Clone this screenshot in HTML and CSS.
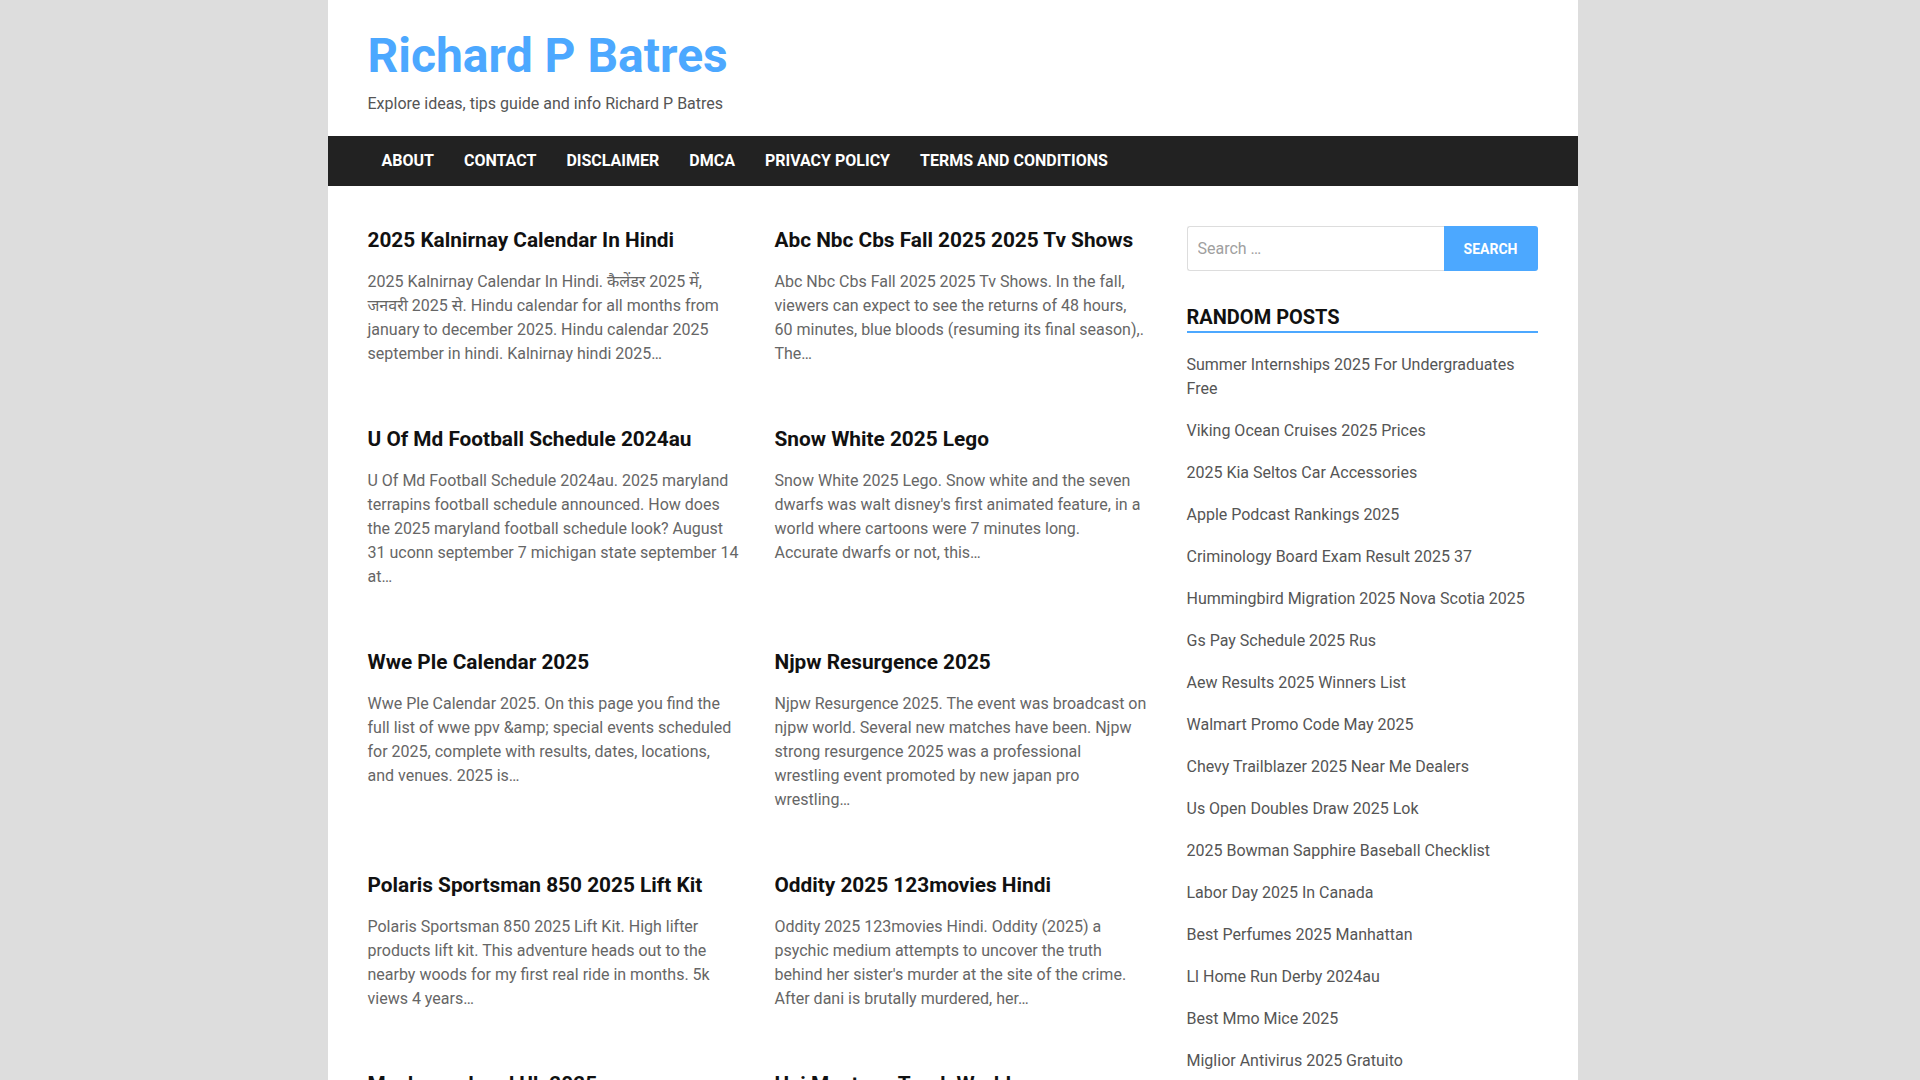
FILE: index.html
```html
<!DOCTYPE html>
<html lang="en">
<head>
<meta charset="utf-8">
<title>Richard P Batres</title>
<link rel="stylesheet" href="styles.css">
</head>
<body>
<div class="site">
  <header class="site-header">
    <h1 class="site-title">Richard P Batres</h1>
    <p class="site-desc">Explore ideas, tips guide and info Richard P Batres</p>
  </header>
  <nav class="main-nav">
    <a href="#">About</a>
    <a href="#">Contact</a>
    <a href="#">Disclaimer</a>
    <a href="#">DMCA</a>
    <a href="#">Privacy Policy</a>
    <a href="#">Terms and Conditions</a>
  </nav>
  <div class="content">
    <main class="posts">
      <article class="post">
        <h2 class="post-title">2025 Kalnirnay Calendar In Hindi</h2>
        <p class="post-excerpt">2025 Kalnirnay Calendar In Hindi. कैलेंडर 2025 में, जनवरी 2025 से. Hindu calendar for all months from january to december 2025. Hindu calendar 2025 september in hindi. Kalnirnay hindi 2025…</p>
      </article>
      <article class="post">
        <h2 class="post-title">Abc Nbc Cbs Fall 2025 2025 Tv Shows</h2>
        <p class="post-excerpt">Abc Nbc Cbs Fall 2025 2025 Tv Shows. In the fall, viewers can expect to see the returns of 48 hours, 60 minutes, blue bloods (resuming its final season),. The…</p>
      </article>
      <article class="post">
        <h2 class="post-title">U Of Md Football Schedule 2024au</h2>
        <p class="post-excerpt">U Of Md Football Schedule 2024au. 2025 maryland terrapins football schedule announced. How does the 2025 maryland football schedule look? August 31 uconn september 7 michigan state september 14 at…</p>
      </article>
      <article class="post">
        <h2 class="post-title">Snow White 2025 Lego</h2>
        <p class="post-excerpt">Snow White 2025 Lego. Snow white and the seven dwarfs was walt disney's first animated feature, in a world where cartoons were 7 minutes long. Accurate dwarfs or not, this…</p>
      </article>
      <article class="post">
        <h2 class="post-title">Wwe Ple Calendar 2025</h2>
        <p class="post-excerpt">Wwe Ple Calendar 2025. On this page you find the full list of wwe ppv &amp;amp; special events scheduled for 2025, complete with results, dates, locations, and venues. 2025 is…</p>
      </article>
      <article class="post">
        <h2 class="post-title">Njpw Resurgence 2025</h2>
        <p class="post-excerpt">Njpw Resurgence 2025. The event was broadcast on njpw world. Several new matches have been. Njpw strong resurgence 2025 was a professional wrestling event promoted by new japan pro wrestling…</p>
      </article>
      <article class="post">
        <h2 class="post-title">Polaris Sportsman 850 2025 Lift Kit</h2>
        <p class="post-excerpt">Polaris Sportsman 850 2025 Lift Kit. High lifter products lift kit. This adventure heads out to the nearby woods for my first real ride in months. 5k views 4 years…</p>
      </article>
      <article class="post">
        <h2 class="post-title">Oddity 2025 123movies Hindi</h2>
        <p class="post-excerpt">Oddity 2025 123movies Hindi. Oddity (2025) a psychic medium attempts to uncover the truth behind her sister's murder at the site of the crime. After dani is brutally murdered, her…</p>
      </article>
      <article class="post">
        <h2 class="post-title">Mushroomhead Uk 2025</h2>
        <p class="post-excerpt">Mushroomhead Uk 2025. The band returns to the united kingdom for a run of headline shows across the country…</p>
      </article>
      <article class="post">
        <h2 class="post-title">Hai Mustang Truck World</h2>
        <p class="post-excerpt">Hai Mustang Truck World. Explore the latest lineup of trucks and accessories available this season…</p>
      </article>
    </main>
    <aside class="sidebar">
      <form class="search-form">
        <input class="search-field" type="search" placeholder="Search …">
        <button class="search-submit" type="button">Search</button>
      </form>
      <section class="widget">
        <h3 class="widget-title">Random Posts</h3>
        <ul class="widget-list">
          <li><a href="#">Summer Internships 2025 For Undergraduates Free</a></li>
          <li><a href="#">Viking Ocean Cruises 2025 Prices</a></li>
          <li><a href="#">2025 Kia Seltos Car Accessories</a></li>
          <li><a href="#">Apple Podcast Rankings 2025</a></li>
          <li><a href="#">Criminology Board Exam Result 2025 37</a></li>
          <li><a href="#">Hummingbird Migration 2025 Nova Scotia 2025</a></li>
          <li><a href="#">Gs Pay Schedule 2025 Rus</a></li>
          <li><a href="#">Aew Results 2025 Winners List</a></li>
          <li><a href="#">Walmart Promo Code May 2025</a></li>
          <li><a href="#">Chevy Trailblazer 2025 Near Me Dealers</a></li>
          <li><a href="#">Us Open Doubles Draw 2025 Lok</a></li>
          <li><a href="#">2025 Bowman Sapphire Baseball Checklist</a></li>
          <li><a href="#">Labor Day 2025 In Canada</a></li>
          <li><a href="#">Best Perfumes 2025 Manhattan</a></li>
          <li><a href="#">Ll Home Run Derby 2024au</a></li>
          <li><a href="#">Best Mmo Mice 2025</a></li>
          <li><a href="#">Miglior Antivirus 2025 Gratuito</a></li>
          <li><a href="#">Spring Break 2025 Dates Texas</a></li>
          <li><a href="#">Nfl Draft 2025 Order Of Picks</a></li>
        </ul>
      </section>
    </aside>
  </div>
</div>
</body>
</html>
```
FILE: styles.css
```css
* { box-sizing: border-box; }

html, body {
  margin: 0;
  padding: 0;
}

body {
  background: #dddddd;
  padding-right: 15px;
  font-family: Roboto, "Noto Sans", "Noto Sans Devanagari", sans-serif;
  font-size: 16px;
  line-height: 1.5;
  color: #555555;
}

a { text-decoration: none; color: inherit; }

.site {
  width: 1250px;
  margin: 0 auto;
  background: #ffffff;
  min-height: 1600px;
}

.site-header {
  padding: 26px 40px 20px;
}

.site-title {
  margin: 0;
  font-size: 48px;
  line-height: 60px;
  font-weight: 700;
  color: #4ca8ff;
}

.site-desc {
  margin: 6px 0 0;
  font-size: 16px;
  line-height: 24px;
  color: #555555;
}

.main-nav {
  display: flex;
  height: 50px;
  align-items: center;
  padding: 0 39px;
  background: #222222;
}

.main-nav a {
  padding: 0 15px;
  font-size: 16px;
  font-weight: 700;
  line-height: 50px;
  text-transform: uppercase;
  color: #ffffff;
}

.content {
  display: flex;
  gap: 39px;
  padding: 41px 40px 0;
}

.posts {
  flex: 0 0 780px;
  display: grid;
  grid-template-columns: 372px 373px;
  column-gap: 35px;
  row-gap: 60px;
  align-content: start;
}

.post-title {
  margin: 0 0 16px;
  font-size: 20.8px;
  line-height: 27px;
  font-weight: 700;
  color: #111111;
}

.post-excerpt {
  margin: 0;
  font-size: 16px;
  line-height: 24px;
  color: #666666;
}

.sidebar {
  flex: 1 1 auto;
}

.search-form {
  display: flex;
  height: 45px;
  margin-top: -1px;
}

.search-field {
  flex: 1 1 auto;
  min-width: 0;
  height: 45px;
  border: 1px solid #dddddd;
  border-right: none;
  border-radius: 3px 0 0 3px;
  padding: 0 10px;
  font-family: Roboto, sans-serif;
  font-size: 16px;
  color: #555555;
  outline: none;
}

.search-field::placeholder { color: #a0a0a0; }

.search-submit {
  flex: 0 0 94px;
  height: 45px;
  border: none;
  border-radius: 0 3px 3px 0;
  background: #4ca8ff;
  color: #ffffff;
  font-family: Roboto, sans-serif;
  font-size: 14px;
  font-weight: 700;
  text-transform: uppercase;
}

.widget {
  margin-top: 33px;
}

.widget-title {
  margin: 0;
  padding-bottom: 0;
  border-bottom: 2px solid #4ca8ff;
  font-size: 20px;
  line-height: 27px;
  font-weight: 700;
  text-transform: uppercase;
  color: #111111;
}

.widget-list {
  list-style: none;
  margin: 20px 0 0;
  padding: 0;
  display: flex;
  flex-direction: column;
  gap: 18px;
}

.widget-list li {
  font-size: 16px;
  line-height: 24px;
  color: #555555;
}
```
